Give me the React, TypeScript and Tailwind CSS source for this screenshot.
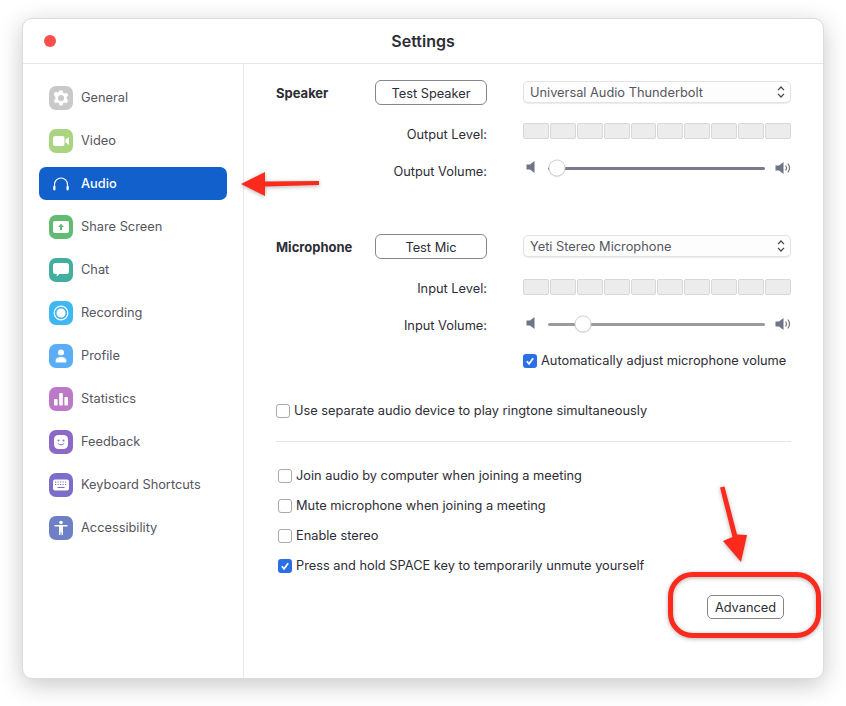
import type { ReactNode } from "react";

const SIDEBAR = [
  { name: "General", tile: "bg-[#c9c9c9]", icon: "gear" },
  { name: "Video", tile: "bg-[#a9d480]", icon: "video" },
  { name: "Audio", tile: "", icon: "audio", active: true },
  { name: "Share Screen", tile: "bg-[#62bb73]", icon: "share" },
  { name: "Chat", tile: "bg-[#41ae9f]", icon: "chat" },
  { name: "Recording", tile: "bg-[#3fb7f3]", icon: "record" },
  { name: "Profile", tile: "bg-[#59aef6]", icon: "profile" },
  { name: "Statistics", tile: "bg-[#bb79c7]", icon: "stats" },
  { name: "Feedback", tile: "bg-[#8b69c4]", icon: "feedback" },
  { name: "Keyboard Shortcuts", tile: "bg-[#7b6dc9]", icon: "keyboard" },
  { name: "Accessibility", tile: "bg-[#6d7fc5]", icon: "access" },
];

function TileIcon({ icon, color }: { icon: string; color: string }) {
  if (icon === "gear") {
    return (
      <svg viewBox="0 0 24 24" className="w-6 h-6">
        <path
          fill="#fff"
          d="M10.4 4.5h3.2l.5 2.2 1.5.8 2.1-.7 1.6 2.8-1.6 1.5v1.8l1.6 1.5-1.6 2.8-2.1-.7-1.5.8-.5 2.2h-3.2l-.5-2.2-1.5-.8-2.1.7-1.6-2.8 1.6-1.5v-1.8L4.700 8.600l1.600-2.800 2.100.7 1.500-.8z"
        />
        <circle cx="12" cy="12" r="3" fill={color} />
      </svg>
    );
  }
  if (icon === "video") {
    return (
      <svg viewBox="0 0 24 24" className="w-6 h-6" fill="#fff">
        <rect x="4" y="7" width="11.500" height="10" rx="2" />
        <path d="M16.500 10.500 20 8v8l-3.500-2.500z" />
      </svg>
    );
  }
  if (icon === "audio") {
    return (
      <svg viewBox="0 0 24 24" className="w-6 h-6" fill="none">
        <path d="M5.500 15v-2.500a6.500 6.500 0 0 1 13 0V15" stroke="#fff" strokeWidth="1.200" />
        <rect x="4.200" y="14" width="2.300" height="4.400" rx="1.100" fill="#fff" />
        <rect x="17.500" y="14" width="2.300" height="4.400" rx="1.100" fill="#fff" />
      </svg>
    );
  }
  if (icon === "share") {
    return (
      <svg viewBox="0 0 24 24" className="w-6 h-6">
        <rect x="4" y="6" width="16" height="12" rx="2" fill="#fff" />
        <path d="M12 8.800 15 12h-2v3h-2v-3H9z" fill={color} />
      </svg>
    );
  }
  if (icon === "chat") {
    return (
      <svg viewBox="0 0 24 24" className="w-6 h-6" fill="#fff">
        <path d="M6.500 5h11A2.500 2.500 0 0 1 20 7.500v6a2.500 2.500 0 0 1-2.500 2.500h-7l-2.800 2.500V16H6.500A2.500 2.500 0 0 1 4 13.500v-6A2.500 2.500 0 0 1 6.500 5z" />
      </svg>
    );
  }
  if (icon === "record") {
    return (
      <svg viewBox="0 0 24 24" className="w-6 h-6">
        <circle cx="12" cy="12" r="6.800" fill="none" stroke="#fff" strokeWidth="1.200" />
        <circle cx="12" cy="12" r="4.500" fill="#fff" />
      </svg>
    );
  }
  if (icon === "profile") {
    return (
      <svg viewBox="0 0 24 24" className="w-6 h-6" fill="#fff">
        <circle cx="12" cy="8.500" r="3" />
        <path d="M6.500 17c0-2.500 2.200-4 5.500-4s5.500 1.500 5.500 4a1.500 1.500 0 0 1-1.500 1.500H8A1.500 1.500 0 0 1 6.500 17z" />
      </svg>
    );
  }
  if (icon === "stats") {
    return (
      <svg viewBox="0 0 24 24" className="w-6 h-6" fill="#fff">
        <rect x="5" y="12" width="3.600" height="6.500" rx="0.800" />
        <rect x="10.200" y="6" width="3.600" height="12.500" rx="0.800" />
        <rect x="15.400" y="10" width="3.600" height="8.500" rx="0.800" />
      </svg>
    );
  }
  if (icon === "feedback") {
    return (
      <svg viewBox="0 0 24 24" className="w-6 h-6">
        <rect x="5" y="5" width="14" height="14" rx="4.500" fill="#fff" />
        <circle cx="9.500" cy="10.500" r="1" fill={color} />
        <circle cx="14.500" cy="10.500" r="1" fill={color} />
        <path d="M9 13.500c1.500 1.800 4.500 1.800 6 0" fill="none" stroke={color} strokeWidth="1" strokeLinecap="round" />
      </svg>
    );
  }
  if (icon === "keyboard") {
    return (
      <svg viewBox="0 0 24 24" className="w-6 h-6">
        <rect x="4" y="6.500" width="16" height="11" rx="2" fill="#fff" />
        <path
          d="M6 9h1.200M8.500 9h1.200M11 9h1.200M13.500 9h1.200M16 9h1.200M6 11.500h1.200M8.500 11.500h1.200M11 11.500h1.200M13.500 11.500h1.200M16 11.500h1.200M8.500 14.500h7"
          stroke={color}
          strokeWidth="1.200"
        />
      </svg>
    );
  }
  return (
    <svg viewBox="0 0 24 24" className="w-6 h-6" fill="#fff">
      <circle cx="12" cy="6.500" r="1.800" />
      <path d="M5.500 9h13v1.500h-4.500v8.500h-1.400l-.6-5-.6 5H10v-8.500H5.500z" />
    </svg>
  );
}

const TILE_FILL: Record<string, string> = {
  gear: "#c9c9c9",
  share: "#62bb73",
  feedback: "#8b69c4",
  keyboard: "#7b6dc9",
};

function Sidebar() {
  return (
    <aside className="w-[221px] shrink-0 border-r border-[#e8e8ea] pl-4 pt-[12px]">
      {SIDEBAR.map((item) => (
        <div key={item.name} className="h-[43px] flex items-center">
          <div
            className={`w-[188px] h-[33px] flex items-center rounded-[7px] pl-[10px] gap-2 text-[12.8px] ${
              item.active ? "bg-[#1160cc] text-white font-medium" : "text-[#55555f]"
            }`}
          >
            <span className={`w-6 h-6 rounded-[7px] shrink-0 ${item.tile}`}>
              <TileIcon icon={item.icon} color={TILE_FILL[item.icon] ?? "#fff"} />
            </span>
            {item.name}
          </div>
        </div>
      ))}
    </aside>
  );
}

function OutlineButton({ children }: { children: ReactNode }) {
  return (
    <button className="w-[112px] h-[25px] pt-[2px] rounded-[6px] border border-[#85858b] bg-white text-[12.8px] text-[#2d2d36]">
      {children}
    </button>
  );
}

function DeviceSelect({ label }: { label: string }) {
  return (
    <div className="w-[268px] h-[22px] mt-px flex items-center justify-between rounded-[5px] border border-[#e3e3e5] bg-[#fdfdfd] pl-[6px] pr-1 text-[12.8px] text-[#56565e] shadow-[0_1px_1px_rgba(0,0,0,0.08)]">
      <span className="pt-px">{label}</span>
      <svg viewBox="0 0 10 16" className="w-[10px] h-4" fill="none" stroke="#44444c" strokeWidth="1.200">
        <path d="M2 6.200 5 3l3 3.200M2 9.800 5 13l3-3.200" />
      </svg>
    </div>
  );
}

function Meter() {
  return (
    <div className="w-[268px] h-4 grid grid-cols-10 gap-px">
      {Array.from({ length: 10 }, (_, i) => (
        <div key={i} className="rounded-[2px] border border-[#d8d8d8] bg-[#ececec]" />
      ))}
    </div>
  );
}

function SpeakerIcon({ loud }: { loud?: boolean }) {
  return (
    <svg viewBox="0 0 16 12" className="w-4 h-3 shrink-0" fill="#6f7486">
      <path d="M0.500 3.500h3.500l4.500-3.500v12L4 8.500H0.500z" />
      {loud && (
        <path
          d="M10.500 3.500c1.200 1.500 1.200 3.500 0 5M12.800 1.500c2.100 2.700 2.100 6.300 0 9"
          fill="none"
          stroke="#6f7486"
          strokeWidth="1.200"
        />
      )}
    </svg>
  );
}

function Slider({ value, track }: { value: number; track: string }) {
  return (
    <div className="w-[268px] h-5 flex items-center">
      <span className="w-[25px] shrink-0 pl-[3px] -mt-[3px]">
        <SpeakerIcon />
      </span>
      <div className={`relative h-[3px] w-[218px] rounded-full ${track}`}>
        <div
          className="absolute top-1/2 -translate-x-1/2 -translate-y-1/2 w-[17px] h-[17px] rounded-full border border-[#d4d4d4] bg-white shadow-[0_0.500px_1px_rgba(0,0,0,0.15)]"
          style={{ left: value }}
        />
      </div>
      <span className="ml-[10px] -mt-px">
        <SpeakerIcon loud />
      </span>
    </div>
  );
}

function Checkbox({ checked, label }: { checked?: boolean; label: string }) {
  return (
    <label className="flex items-center gap-1 h-5 text-[12.8px] text-[#2d2d36]">
      {checked ? (
        <span className="w-[14px] h-[14px] rounded-[3px] bg-[#2a6fe6] flex items-center justify-center">
          <svg viewBox="0 0 12 12" className="w-3 h-3" fill="none" stroke="#fff" strokeWidth="1.700">
            <path d="M2.800 6.300 5 8.800l4.200-5.600" />
          </svg>
        </span>
      ) : (
        <span className="w-[14px] h-[14px] rounded-[3px] border border-[#a9a9ad] bg-white" />
      )}
      {label}
    </label>
  );
}

function Label({ children, className }: { children: ReactNode; className: string }) {
  return <div className={`w-[211px] mr-9 text-right text-[12.8px] leading-5 text-[#2d2d36] ${className}`}>{children}</div>;
}

function AudioPane() {
  return (
    <main className="flex-1 pl-[32px] pr-[32px] pt-4">
      <div className="flex h-[25px]">
        <div className="w-[99px] text-[13px] font-bold leading-[27px] text-[#2d2d36]">Speaker</div>
        <OutlineButton>Test Speaker</OutlineButton>
        <div className="ml-9">
          <DeviceSelect label="Universal Audio Thunderbolt" />
        </div>
      </div>
      <div className="flex mt-[18px] h-4">
        <Label className="mt-[2px]">Output Level:</Label>
        <Meter />
      </div>
      <div className="flex mt-[19px] h-5">
        <Label className="mt-1">Output Volume:</Label>
        <Slider value={9} track="bg-[#7a7a8c]" />
      </div>

      <div className="flex mt-[56px] h-[25px]">
        <div className="w-[99px] text-[13px] font-bold leading-[27px] text-[#2d2d36]">Microphone</div>
        <OutlineButton>Test Mic</OutlineButton>
        <div className="ml-9">
          <DeviceSelect label="Yeti Stereo Microphone" />
        </div>
      </div>
      <div className="flex mt-[20px] h-4">
        <Label className="mt-0">Input Level:</Label>
        <Meter />
      </div>
      <div className="flex mt-[19px] h-5">
        <Label className="mt-[2px]">Input Volume:</Label>
        <Slider value={35} track="bg-[#9b9b9e]" />
      </div>
      <div className="ml-[247px] mt-[17px]">
        <Checkbox checked label="Automatically adjust microphone volume" />
      </div>

      <div className="mt-[30px]">
        <Checkbox label="Use separate audio device to play ringtone simultaneously" />
      </div>
      <div className="mt-[20px] border-t border-[#e6e6e8]" />

      <div className="mt-6 ml-[2px] flex flex-col gap-[10px]">
        <Checkbox label="Join audio by computer when joining a meeting" />
        <Checkbox label="Mute microphone when joining a meeting" />
        <Checkbox label="Enable stereo" />
        <Checkbox checked label="Press and hold SPACE key to temporarily unmute yourself" />
      </div>

      <div className="mt-[19px] mr-[7px] flex justify-end">
        <button className="w-[77px] h-6 pt-px rounded-[5px] border border-[#85858b] bg-white text-[12.8px] text-[#2d2d36]">
          Advanced
        </button>
      </div>
    </main>
  );
}

function Annotations() {
  return (
    <svg
      viewBox="0 0 846 706"
      className="absolute inset-0 w-full h-full pointer-events-none drop-shadow-[0_1px_2px_rgba(0,0,0,0.3)]"
    >
      <path d="M319 181 265 181.500V172L241 184l24 12v-9.500L319 185z" fill="#fb2a1c" />
      <path d="M720 487.500 724.500 486.500 737 534.500 747 535 741 562 723 541 732.500 537z" fill="#fb2a1c" />
      <rect x="670.500" y="574.500" width="148" height="61" rx="22" fill="none" stroke="#fb2a1c" strokeWidth="5" />
    </svg>
  );
}

export default function App() {
  return (
    <div className="relative w-[846px] h-[706px] overflow-hidden bg-white pl-[22px] pt-[18px] font-['Inter',sans-serif]">
      <div className="w-[802px] h-[661px] flex flex-col rounded-[10px] border border-[#dcdcdc] bg-white shadow-[0_6px_24px_rgba(0,0,0,0.22)]">
        <header className="relative h-[45px] shrink-0 flex items-center justify-center border-b border-[#e8e8ea]">
          <span className="absolute left-[21px] top-[16px] w-3 h-3 rounded-full bg-[#fc4e4b]" />
          <h1 className="text-[16px] font-semibold text-[#2d2d36]">Settings</h1>
        </header>
        <div className="flex-1 flex">
          <Sidebar />
          <AudioPane />
        </div>
      </div>
      <Annotations />
    </div>
  );
}
